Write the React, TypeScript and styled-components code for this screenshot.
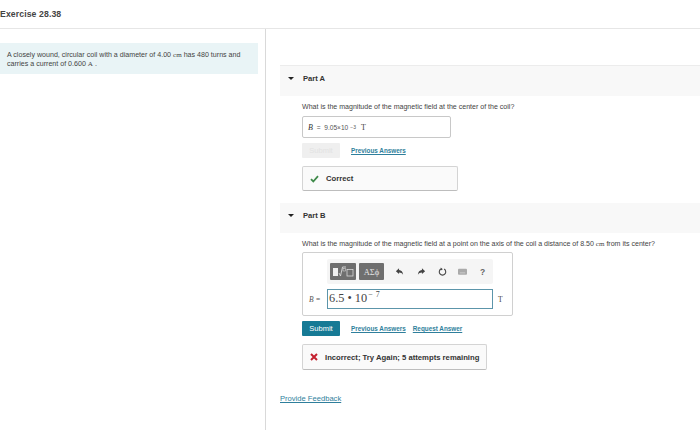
import React from "react";
import styled, { createGlobalStyle } from "styled-components";

const Global = createGlobalStyle`
  html, body { margin: 0; padding: 0; background: #fff; }
  body { font-family: "Liberation Sans", Arial, sans-serif; color: #333; }
`;
const Page = styled.div`width: 700px; height: 430px; overflow: hidden; display: flex; flex-direction: column;`;
const Header = styled.header`
  height: 27px; flex: none; padding-bottom: 1px; border-bottom: 1px solid #e6e6e6; display: flex; align-items: center;
  font-size: 8.7px; font-weight: 700; color: #444; letter-spacing: 0.1px;
`;
const Body = styled.div`flex: 1; display: flex; min-height: 0;`;
const Left = styled.aside`width: 265px; flex: none; border-right: 1px solid #d9d9d9; padding-top: 14px;`;
const Intro = styled.div`
  width: 258px; height: 31px; background: #e9f4f6; padding: 8px 0 0 7px; box-sizing: border-box;
  font-size: 7.1px; line-height: 9px; color: #444;
`;
const Serif = styled.span`font-family: "Liberation Serif", serif;`;
const Right = styled.main`flex: 1; padding: 36px 0 0 14px; min-width: 0;`;
const Band = styled.div<{ $top?: boolean }>`
  height: ${(p) => (p.$top ? 31 : 30)}px; box-sizing: border-box; padding: 0 0 6px 8px; background: #f8f8f8; display: flex; align-items: center; gap: 9px;
  font-size: 7.6px; font-weight: 700; color: #333;
  border-top: ${(p) => (p.$top ? "1px solid #ececec" : "0")};
`;
const Caret = styled.span`width: 0; height: 0; border-left: 3px solid transparent; border-right: 3px solid transparent; border-top: 3px solid #222;`;
const Part = styled.section`padding: 6px 0 0 22px;`;
const Question = styled.p`margin: 0; font-size: 7.05px; line-height: 10px; height: 10px; color: #444; white-space: nowrap;`;
const AnswerBox = styled.div`
  margin-top: 4px; width: 149px; height: 22px; box-sizing: border-box; border: 1px solid #c8c8c8; border-radius: 2px;
  display: flex; align-items: center; padding-left: 5px; font-size: 6.6px; color: #555; gap: 2px; white-space: pre;
`;
const Var = styled.i`font-family: "Liberation Serif", serif; font-size: 8px; color: #333;`;
const Unit = styled.span`font-family: "Liberation Serif", serif; font-size: 8px; color: #444; margin-left: 3px;`;
const Sup = styled.sup`font-size: 5px; line-height: 0;`;
const Actions = styled.div`margin-top: 5px; display: flex; align-items: center; height: 15px; gap: 11px;`;
const SubmitBtn = styled.button<{ $off?: boolean }>`
  width: 38px; height: 15px; padding: 0; border: 0; border-radius: 1px; font: 7.5px "Liberation Sans", sans-serif;
  background: ${(p) => (p.$off ? "#efefef" : "#167a95")};
  color: ${(p) => (p.$off ? "#e2e2e2" : "#fff")};
`;
const TextLink = styled.a`
  font-size: 6.35px; font-weight: 700; color: #2f7f9c; text-decoration: underline;
  & + & { margin-left: -4px; }
`;
const Feedback = styled.div<{ $w: number; $h: number }>`
  margin-top: 8px; width: ${(p) => p.$w}px; height: ${(p) => p.$h}px; box-sizing: border-box;
  border: 1px solid #d4d4d4; border-bottom-color: #bdbdbd; border-radius: 2px; background: #fafafa;
  display: flex; align-items: center; gap: 7px; padding-left: 7px;
  font-size: 7.7px; font-weight: 700; color: #333; white-space: nowrap;
`;
const MathCard = styled.div`
  margin-top: 3px; width: 211px; height: 64px; box-sizing: border-box; border: 1px solid #d0d0d0; border-radius: 2px;
  padding: 6px 0 0 5px; display: flex; flex-direction: column; gap: 5px;
`;
const Toolbar = styled.div`
  margin-left: 19px; width: 166px; height: 25px; box-sizing: border-box; background: #f5f5f5;
  display: flex; align-items: center; padding-left: 3px; border-radius: 2px;
`;
const ToolBtn = styled.div<{ $w: number }>`
  width: ${(p) => p.$w}px; height: 17px; background: #6f6f6f; border-radius: 1px; margin-right: 3px; color: #e4e4e4;
  display: flex; align-items: center; justify-content: center; font: 8.5px "Liberation Serif", serif; flex: none;
`;
const ToolIcon = styled.svg<{ $ml: number }>`width: 9px; height: 9px; margin-left: ${(p) => p.$ml}px; flex: none;`;
const Help = styled.span`margin-left: 13px; font-size: 8.5px; font-weight: 700; color: #666;`;
const InputRow = styled.div`display: flex; align-items: center; height: 20px;`;
const Label = styled.i`font: italic 7.5px "Liberation Serif", serif; color: #555; width: 19px; flex: none; padding-left: 1px; box-sizing: border-box;`;
const MathInput = styled.div`
  width: 166px; height: 20px; box-sizing: border-box; border: 1px solid #5c95aa; padding-left: 1px;
  font: 12.3px/17px "Liberation Serif", serif; color: #444; white-space: nowrap;
`;
const InputSup = styled.sup`font-size: 8px; line-height: 0; vertical-align: 5px; margin-left: 1px; word-spacing: 1px;`;
const RowUnit = styled.span`font: 7.5px "Liberation Serif", serif; color: #444; margin-left: 5px;`;
const Provide = styled.a`display: block; margin-top: 24px; font-size: 7.6px; line-height: 10px; color: #2f7f9c; text-decoration: underline;`;
const Spacer = styled.div`height: 12px;`;

const Check = () => (
  <svg width="9" height="8" viewBox="0 0 9 8"><path d="M1 4.2 3.3 6.5 8 1.2" fill="none" stroke="#3f8a4a" strokeWidth="1.8" /></svg>
);
const Cross = () => (
  <svg width="8" height="8" viewBox="0 0 8 8"><path d="M1 1 7 7M7 1 1 7" fill="none" stroke="#c4202f" strokeWidth="2" /></svg>
);

export default function App() {
  return (
    <Page>
      <Global />
      <Header>Exercise 28.38</Header>
      <Body>
        <Left>
          <Intro>
            A closely wound, circular coil with a diameter of 4.00 <Serif>cm</Serif> has 480 turns and<br />
            carries a current of 0.600 <Serif>A</Serif> .
          </Intro>
        </Left>
        <Right>
          <Band $top><Caret />Part A</Band>
          <Part>
            <Question>What is the magnitude of the magnetic field at the center of the coil?</Question>
            <AnswerBox>
              <Var>B</Var> =  9.05×10<Sup>−3</Sup><Unit>T</Unit>
            </AnswerBox>
            <Actions>
              <SubmitBtn $off>Submit</SubmitBtn>
              <TextLink>Previous Answers</TextLink>
            </Actions>
            <Feedback $w={156} $h={25}><Check />Correct</Feedback>
          </Part>
          <Spacer />
          <Band><Caret />Part B</Band>
          <Part>
            <Question>What is the magnitude of the magnetic field at a point on the axis of the coil a distance of 8.50 <Serif>cm</Serif> from its center?</Question>
            <MathCard>
              <Toolbar>
                <ToolBtn $w={26}>
                  <svg width="22" height="13" viewBox="0 0 22 13">
                    <rect x="1" y="3" width="5" height="8" fill="#f0f0f0" />
                    <path d="M7 8l1.5 3L10.5 2H14" fill="none" stroke="#e4e4e4" strokeWidth="0.8" />
                    <rect x="11" y="3.5" width="2.5" height="2.5" fill="none" stroke="#e4e4e4" strokeWidth="0.5" />
                    <rect x="15" y="4.5" width="6" height="6.5" fill="none" stroke="#e4e4e4" strokeWidth="0.7" />
                  </svg>
                </ToolBtn>
                <ToolBtn $w={25}>ΑΣϕ</ToolBtn>
                <ToolIcon $ml={8} viewBox="0 0 10 10"><path d="M4.5 1.5 1 4.8l3.5 3V6C6.5 6 8 6.8 9 8.6 8.8 5.5 7 3.6 4.5 3.4Z" fill="#444" /></ToolIcon>
                <ToolIcon $ml={13} viewBox="0 0 10 10"><path d="M5.5 1.5 9 4.8l-3.5 3V6C3.5 6 2 6.8 1 8.6 1.2 5.5 3 3.6 5.5 3.4Z" fill="#444" /></ToolIcon>
                <ToolIcon $ml={12} viewBox="0 0 10 10"><path d="M6.8 2.3A3.6 3.6 0 1 1 3.2 2.3" fill="none" stroke="#444" strokeWidth="1.2" /><path d="M3 .6 5.4 2.6 3 3.9Z" fill="#444" /></ToolIcon>
                <ToolIcon $ml={11} viewBox="0 0 10 10"><rect x="0" y="2" width="10" height="6.5" rx="1" fill="#aaa" /><path d="M2 6.5h6" stroke="#ddd" strokeWidth="0.7" /></ToolIcon>
                <Help>?</Help>
              </Toolbar>
              <InputRow>
                <Label>B =</Label>
                <MathInput>6.5 • 10<InputSup>− 7</InputSup></MathInput>
                <RowUnit>T</RowUnit>
              </InputRow>
            </MathCard>
            <Actions>
              <SubmitBtn>Submit</SubmitBtn>
              <TextLink>Previous Answers</TextLink>
              <TextLink>Request Answer</TextLink>
            </Actions>
            <Feedback $w={185} $h={26}><Cross />Incorrect; Try Again; 5 attempts remaining</Feedback>
          </Part>
          <Provide>Provide Feedback</Provide>
        </Right>
      </Body>
    </Page>
  );
}
